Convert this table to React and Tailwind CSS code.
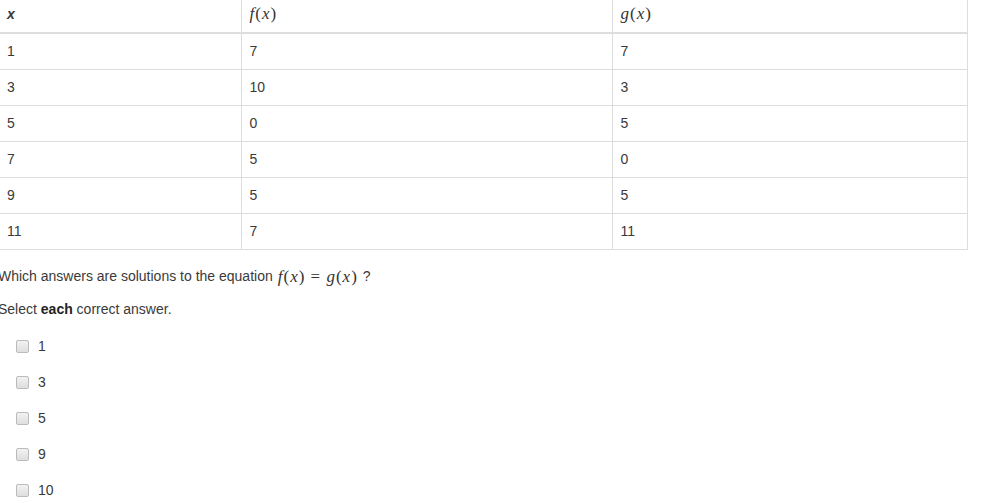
import React from 'react';

const ROWS = [
  ['1', '7', '7'],
  ['3', '10', '3'],
  ['5', '0', '5'],
  ['7', '5', '0'],
  ['9', '5', '5'],
  ['11', '7', '11'],
];

const CHOICES = ['1', '3', '5', '9', '10'];

function Fn({ name }) {
  return (
    <span className="font-['Liberation_Serif',serif] text-[17px] tracking-[1px] text-[#333]">
      <i>{name}</i>(<i>x</i>)
    </span>
  );
}

export default function App() {
  return (
    <div className="w-[998px] h-[503px] overflow-hidden bg-white font-['Liberation_Sans',Arial,sans-serif] text-[14px] text-[#3a3a3a]">
      <table className="w-[968px] border-collapse table-fixed">
        <colgroup>
          <col className="w-[241px]" />
          <col className="w-[371px]" />
          <col />
        </colgroup>
        <thead>
          <tr className="h-[33px]">
            <th className="border-r border-b-2 border-[#ddd] pl-[7px] pb-[4px] text-left align-middle font-bold italic">x</th>
            <th className="border-x border-b-2 border-[#ddd] pl-[8px] pb-[4px] text-left align-middle font-normal"><Fn name="f" /></th>
            <th className="border-x border-b-2 border-[#ddd] pl-[8px] pb-[4px] text-left align-middle font-normal"><Fn name="g" /></th>
          </tr>
        </thead>
        <tbody>
          {ROWS.map((r, i) => (
            <tr key={i} className="h-[36px]">
              <td className="border-r border-b border-[#ddd] pl-[7px] align-middle">{r[0]}</td>
              <td className="border-x border-b border-[#ddd] pl-[8px] align-middle">{r[1]}</td>
              <td className="border-x border-b border-[#ddd] pl-[8px] align-middle">{r[2]}</td>
            </tr>
          ))}
        </tbody>
      </table>

      <p className="mt-[16px] ml-[-2px] h-[22px] flex items-center gap-[5px]">
        Which answers are solutions to the equation
        <span className="font-['Liberation_Serif',serif] text-[17px] tracking-[1px] text-[#333]">
          <i>f</i>(<i>x</i>) = <i>g</i>(<i>x</i>)
        </span>
        ?
      </p>
      <p className="mt-[11px] ml-[-2px] h-[22px] flex items-center">
        Select&nbsp;<b className="text-[#222]">each</b>&nbsp;correct answer.
      </p>

      <ul className="mt-[8px]">
        {CHOICES.map((c) => (
          <li key={c} className="h-[36px] flex items-center pl-[16px]">
            <span className="w-[13px] h-[13px] rounded-[2px] border border-[#bbb] bg-gradient-to-b from-[#f2f2f2] to-[#dedede]" />
            <span className="ml-[9px]">{c}</span>
          </li>
        ))}
      </ul>
    </div>
  );
}
